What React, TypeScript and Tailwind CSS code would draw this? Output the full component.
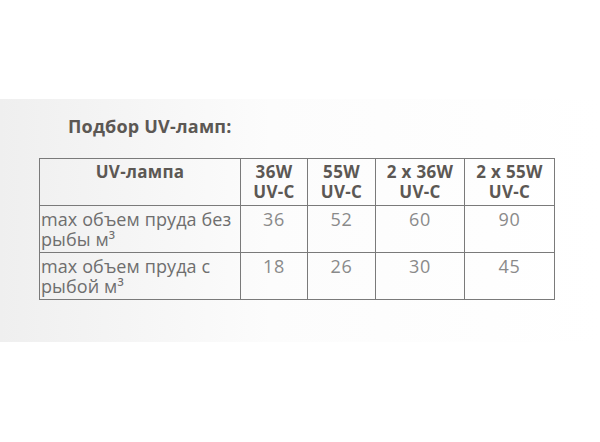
import React from "react";

const columns = ["36W", "55W", "2 x 36W", "2 x 55W"];
const widths = ["w-[67px]", "w-[68px]", "w-[89px]", "w-[90px]"];

const rows = [
  { label: ["max объем пруда без", "рыбы м³"], values: ["36", "52", "60", "90"] },
  { label: ["max объем пруда с", "рыбой м³"], values: ["18", "26", "30", "45"] },
];

const App = () => {
  return (
    <div className="w-[600px] h-[442px] bg-white pt-[99px] font-['Open_Sans',sans-serif]">
      <div className="h-[243px] bg-gradient-to-r from-[#efefef] via-[#fcfcfc] via-45% to-white pt-[17px]">
        <h2 className="pl-[68px] text-[18px] leading-[20px] font-bold tracking-[0.2px] text-[#5c5854]">
          Подбор UV-ламп:
        </h2>
        <table className="ml-[39px] mt-[22px] table-fixed border-collapse border border-[#7a7a7a] leading-[20px]">
          <thead>
            <tr className="h-[47px]">
              <th className="w-[201px] border border-[#7a7a7a] align-top pt-[3px] text-[17px] tracking-[0.3px] font-bold text-[#5c5854]">
                UV-лампа
              </th>
              {columns.map((col, i) => (
                <th
                  key={col}
                  className={`${widths[i]} border border-[#7a7a7a] align-top pt-[3px] text-[17px] tracking-[0.3px] font-bold text-[#5c5854]`}
                >
                  {col}
                  <br />
                  UV-C
                </th>
              ))}
            </tr>
          </thead>
          <tbody>
            {rows.map((row) => (
              <tr key={row.label[0]} className="h-[47px]">
                <td className="border border-[#7a7a7a] align-top pt-[3px] pl-[1px] text-left whitespace-nowrap overflow-hidden text-[18px] tracking-[0.1px] text-[#6e6e6e]">
                  {row.label[0]}
                  <br />
                  {row.label[1]}
                </td>
                {row.values.map((v, i) => (
                  <td
                    key={i}
                    className="border border-[#7a7a7a] align-top pt-[3px] text-center text-[18px] tracking-[0.6px] text-[#8a8a8a]"
                  >
                    {v}
                  </td>
                ))}
              </tr>
            ))}
          </tbody>
        </table>
      </div>
    </div>
  );
};

export default App;
